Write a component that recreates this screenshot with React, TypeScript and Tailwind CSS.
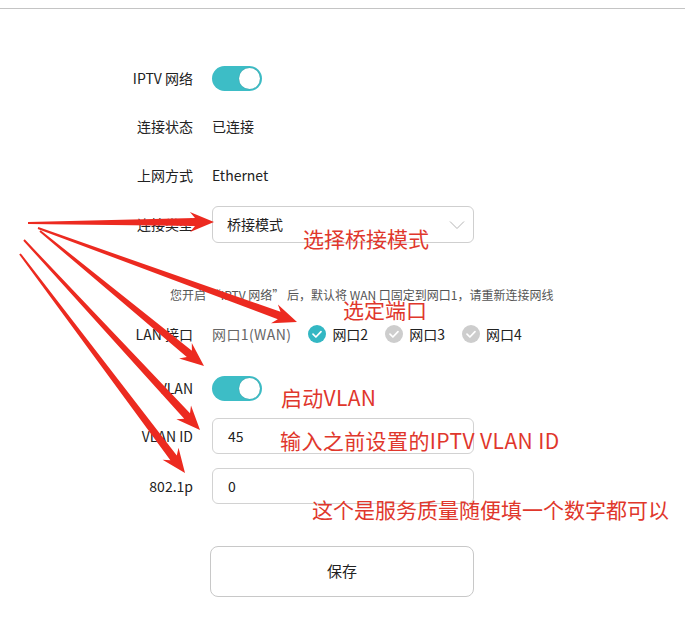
import React from "react";

type Pt = [number, number];

function arrowPoints(s: Pt, t: Pt, w0: number, w1: number, L: number, H: number): string {
  const dx = t[0] - s[0];
  const dy = t[1] - s[1];
  const len = Math.hypot(dx, dy);
  const ux = dx / len;
  const uy = dy / len;
  const nx = -uy;
  const ny = ux;
  const bx = t[0] - ux * L;
  const by = t[1] - uy * L;
  const pts: Pt[] = [
    [s[0] + (nx * w0) / 2, s[1] + (ny * w0) / 2],
    [bx + (nx * w1) / 2 + ux * 3, by + (ny * w1) / 2 + uy * 3],
    [bx + nx * H - ux * 2, by + ny * H - uy * 2],
    [t[0], t[1]],
    [bx - nx * H - ux * 2, by - ny * H - uy * 2],
    [bx - (nx * w1) / 2 + ux * 3, by - (ny * w1) / 2 + uy * 3],
    [s[0] - (nx * w0) / 2, s[1] - (ny * w0) / 2],
  ];
  return pts.map((p) => `${p[0].toFixed(1)},${p[1].toFixed(1)}`).join(" ");
}

const arrows: { s: Pt; t: Pt }[] = [
  { s: [28, 223], t: [214, 222] },
  { s: [38, 228], t: [297, 322] },
  { s: [40, 231], t: [204, 366] },
  { s: [24, 240], t: [200, 430] },
  { s: [20, 254], t: [185, 473] },
];

function Toggle() {
  return (
    <div className="relative h-[25px] w-[50px] rounded-full bg-[#3dbdc6]">
      <div className="absolute right-[2px] top-[2px] h-[21px] w-[21px] rounded-full bg-white shadow-[0_0_1px_rgba(0,0,0,0.3)]" />
    </div>
  );
}

function Check({ active }: { active: boolean }) {
  return (
    <svg width="18" height="18" viewBox="0 0 18 18">
      <circle cx="9" cy="9" r="9" fill={active ? "#33b7c3" : "#cdcdcd"} />
      <path d="M5 9.2 L7.9 12 L13 6.6" fill="none" stroke="#fff" strokeWidth="1.7" strokeLinecap="round" strokeLinejoin="round" />
    </svg>
  );
}

function Row({ label, children, className }: { label: string; children?: React.ReactNode; className?: string }) {
  return (
    <div className={"flex items-center " + (className ?? "")}>
      <div className="w-[193px] text-right text-[14px] text-[#222]">{label}</div>
      <div className="ml-[19px] flex items-center">{children}</div>
    </div>
  );
}

export default function App() {
  return (
    <div
      className="relative h-[622px] w-[685px] overflow-hidden bg-white"
      style={{ fontFamily: '"Noto Sans CJK SC", "Noto Sans", sans-serif' }}
    >
      <div className="mt-[8px] h-px bg-[#c4c4c4]" />

      <div className="flex flex-col">
        <Row label="IPTV 网络" className="mt-[57px] h-[25px]">
          <Toggle />
        </Row>
        <Row label="连接状态" className="mt-[23px] h-[24px]">
          <span className="text-[14px] text-[#222]">已连接</span>
        </Row>
        <Row label="上网方式" className="mt-[25px] h-[24px]">
          <span className="text-[14px] text-[#222]">Ethernet</span>
        </Row>
        <Row label="连接类型" className="mt-[19px] h-[37px]">
          <div className="flex h-[37px] w-[262px] items-center justify-between rounded-[6px] border border-[#cfcfcf] pl-[14px] pr-[8px]">
            <span className="text-[14px] text-[#222]">桥接模式</span>
            <svg width="16" height="10" viewBox="0 0 16 10">
              <path d="M1 1.5 L8 8.5 L15 1.5" fill="none" stroke="#b5b5b5" strokeWidth="1" />
            </svg>
          </div>
        </Row>
        <div className="mt-[40px] flex h-[24px] items-center pl-[170px] text-[12px] text-[#555]">
          您开启 “IPTV 网络” 后，默认将 WAN 口固定到网口1，请重新连接网线
        </div>
        <Row label="LAN 接口" className="mt-[15px] h-[24px]">
          <div className="flex items-center text-[14px]">
            <span className="tracking-[0.4px] text-[#666]">网口1(WAN)</span>
            <span className="ml-[17px] flex items-center gap-[6px] text-[#222]">
              <Check active />
              网口2
            </span>
            <span className="ml-[17px] flex items-center gap-[6px] text-[#222]">
              <Check active={false} />
              网口3
            </span>
            <span className="ml-[17px] flex items-center gap-[6px] text-[#222]">
              <Check active={false} />
              网口4
            </span>
          </div>
        </Row>
        <Row label="VLAN" className="mt-[30px] h-[25px]">
          <Toggle />
        </Row>
        <Row label="VLAN ID" className="mt-[17px] h-[36px]">
          <div className="flex h-[36px] w-[262px] items-center rounded-[6px] border border-[#d2d2d2] pl-[15px] text-[14px] text-[#222]">
            45
          </div>
        </Row>
        <Row label="802.1p" className="mt-[14px] h-[36px]">
          <div className="flex h-[36px] w-[262px] items-center rounded-[6px] border border-[#d2d2d2] pl-[15px] text-[14px] text-[#222]">
            0
          </div>
        </Row>
        <div className="ml-[210px] mt-[42px] flex h-[51px] w-[264px] items-center justify-center rounded-[8px] border border-[#c8c8c8] text-[15px] text-[#222]">
          保存
        </div>
      </div>

      <svg className="pointer-events-none absolute left-0 top-0" width="685" height="622">
        {arrows.map((a, i) => (
          <polygon key={i} points={arrowPoints(a.s, a.t, 2, 8, 22, 10)} fill="#ec2a20" />
        ))}
      </svg>

      <div className="pointer-events-none absolute inset-0 text-[21px] leading-none text-[#e0372c]">
        <span className="absolute left-[303px] top-[228px] whitespace-nowrap">选择桥接模式</span>
        <span className="absolute left-[343px] top-[299px] whitespace-nowrap">选定端口</span>
        <span className="absolute left-[281px] top-[387px] whitespace-nowrap tracking-[0.3px]">启动VLAN</span>
        <span className="absolute left-[280px] top-[430px] whitespace-nowrap tracking-[0.4px]">输入之前设置的IPTV VLAN ID</span>
        <span className="absolute left-[312px] top-[499px] whitespace-nowrap">这个是服务质量随便填一个数字都可以</span>
      </div>
    </div>
  );
}
